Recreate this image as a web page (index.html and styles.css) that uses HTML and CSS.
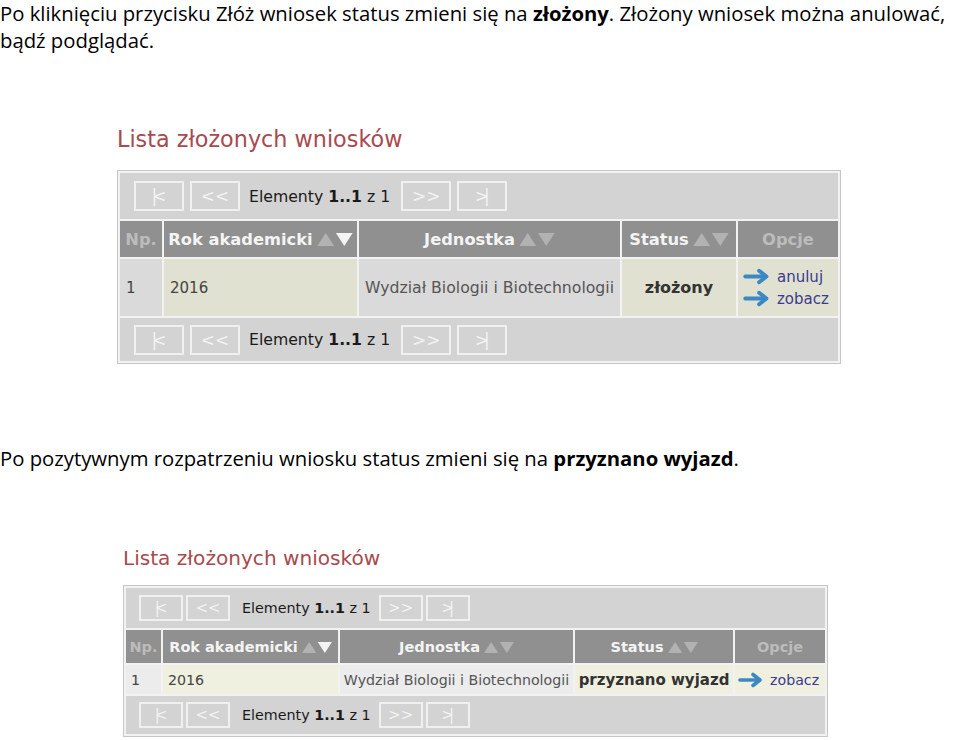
FILE: index.html
```html
<!DOCTYPE html>
<html lang="pl">
<head>
    <meta charset="UTF-8">
    <meta name="viewport" content="width=device-width, initial-scale=1.0">
    <title>Lista złożonych wniosków</title>
    <link rel="stylesheet" href="styles.css">
</head>
<body>
    <p class="doc doc-first">Po kliknięciu przycisku Złóż wniosek status zmieni się na <b>złożony</b>. Złożony wniosek można anulować,<br>bądź podglądać.</p>

    <div class="shot shot-big">
        <h2 class="shot-title">Lista złożonych wniosków</h2>
        <div class="grid-box">
            <table class="grid">
                <colgroup>
                    <col class="c-np"><col class="c-rok"><col class="c-jed"><col class="c-stat"><col class="c-opc">
                </colgroup>
                <tr>
                    <td colspan="5" class="pager pager-top">
                        <div class="pager-bar">
                            <span class="pg-btn"><span class="tight">|&lt;</span></span>
                            <span class="pg-btn">&lt;&lt;</span>
                            <span class="pg-info">Elementy <b>1..1</b> z 1</span>
                            <span class="pg-btn">&gt;&gt;</span>
                            <span class="pg-btn"><span class="tight">&gt;|</span></span>
                        </div>
                    </td>
                </tr>
                <tr class="head">
                    <th class="off">Np.</th>
                    <th>Rok akademicki<svg class="sort" viewBox="0 0 38 14"><polygon class="up" points="0,14 9,0 18,14" /><polygon class="dn" points="20,0 38,0 29,14" /></svg></th>
                    <th>Jednostka<svg class="sort" viewBox="0 0 38 14"><polygon class="up" points="0,14 9,0 18,14" /><polygon class="up" points="20,0 38,0 29,14" /></svg></th>
                    <th>Status<svg class="sort" viewBox="0 0 38 14"><polygon class="up" points="0,14 9,0 18,14" /><polygon class="up" points="20,0 38,0 29,14" /></svg></th>
                    <th class="off">Opcje</th>
                </tr>
                <tr class="row">
                    <td class="plain left">1</td>
                    <td class="tint left">2016</td>
                    <td class="plain unit">Wydział Biologii i Biotechnologii</td>
                    <td class="tint status">złożony</td>
                    <td class="tint opts">
                        <a class="opt" href="#"><svg class="arrow" viewBox="0 0 28 16"><path d="M2 8 H20" /><path d="M15 2.5 L22 8 L15 13.5" /></svg>anuluj</a>
                        <a class="opt" href="#"><svg class="arrow" viewBox="0 0 28 16"><path d="M2 8 H20" /><path d="M15 2.5 L22 8 L15 13.5" /></svg>zobacz</a>
                    </td>
                </tr>
                <tr>
                    <td colspan="5" class="pager pager-bottom">
                        <div class="pager-bar">
                            <span class="pg-btn"><span class="tight">|&lt;</span></span>
                            <span class="pg-btn">&lt;&lt;</span>
                            <span class="pg-info">Elementy <b>1..1</b> z 1</span>
                            <span class="pg-btn">&gt;&gt;</span>
                            <span class="pg-btn"><span class="tight">&gt;|</span></span>
                        </div>
                    </td>
                </tr>
            </table>
        </div>
    </div>

    <p class="doc doc-second">Po pozytywnym rozpatrzeniu wniosku status zmieni się na <b>przyznano wyjazd</b>.</p>

    <div class="shot shot-small">
        <h2 class="shot-title">Lista złożonych wniosków</h2>
        <div class="grid-box">
            <table class="grid">
                <colgroup>
                    <col class="c-np"><col class="c-rok"><col class="c-jed"><col class="c-stat"><col class="c-opc">
                </colgroup>
                <tr>
                    <td colspan="5" class="pager pager-top">
                        <div class="pager-bar">
                            <span class="pg-btn"><span class="tight">|&lt;</span></span>
                            <span class="pg-btn">&lt;&lt;</span>
                            <span class="pg-info">Elementy <b>1..1</b> z 1</span>
                            <span class="pg-btn">&gt;&gt;</span>
                            <span class="pg-btn"><span class="tight">&gt;|</span></span>
                        </div>
                    </td>
                </tr>
                <tr class="head">
                    <th class="off">Np.</th>
                    <th>Rok akademicki<svg class="sort" viewBox="0 0 38 14"><polygon class="up" points="0,14 9,0 18,14" /><polygon class="dn" points="20,0 38,0 29,14" /></svg></th>
                    <th>Jednostka<svg class="sort" viewBox="0 0 38 14"><polygon class="up" points="0,14 9,0 18,14" /><polygon class="up" points="20,0 38,0 29,14" /></svg></th>
                    <th>Status<svg class="sort" viewBox="0 0 38 14"><polygon class="up" points="0,14 9,0 18,14" /><polygon class="up" points="20,0 38,0 29,14" /></svg></th>
                    <th class="off">Opcje</th>
                </tr>
                <tr class="row">
                    <td class="plain left">1</td>
                    <td class="tint left">2016</td>
                    <td class="plain unit">Wydział Biologii i Biotechnologii</td>
                    <td class="tint status">przyznano wyjazd</td>
                    <td class="tint opts">
                        <a class="opt" href="#"><svg class="arrow" viewBox="0 0 28 16"><path d="M2 8 H20" /><path d="M15 2.5 L22 8 L15 13.5" /></svg>zobacz</a>
                    </td>
                </tr>
                <tr>
                    <td colspan="5" class="pager pager-bottom">
                        <div class="pager-bar">
                            <span class="pg-btn"><span class="tight">|&lt;</span></span>
                            <span class="pg-btn">&lt;&lt;</span>
                            <span class="pg-info">Elementy <b>1..1</b> z 1</span>
                            <span class="pg-btn">&gt;&gt;</span>
                            <span class="pg-btn"><span class="tight">&gt;|</span></span>
                        </div>
                    </td>
                </tr>
            </table>
        </div>
    </div>
</body>
</html>
```

FILE: styles.css
```css
body {
    margin: 0;
    background: #fff;
    color: #000;
}
.doc {
    margin: 0;
    font-family: "Open Sans", sans-serif;
    font-size: 20.3px;
    line-height: 27px;
    white-space: nowrap;
}
.doc b {
    font-weight: 700;
}
.doc-second {
    margin-top: 77px;
}

/* screenshots of the application */
.shot {
    font-family: "DejaVu Sans", Verdana, sans-serif;
}
.shot-title {
    margin: 0;
    font-weight: normal;
    color: #a84a4f;
}
.grid-box {
    display: inline-block;
    border: 1px solid #c6c6c6;
}
.grid {
    border-collapse: separate;
    border-spacing: 2px;
    background: #f2f2f2;
    table-layout: fixed;
}
.grid td, .grid th {
    padding: 0;
}
.pager {
    background: #d3d3d3;
}
.pager-bar {
    display: flex;
    align-items: center;
}
.pg-btn {
    display: flex;
    align-items: center;
    justify-content: center;
    box-sizing: border-box;
    border: 2px solid #f0f0f0;
    color: #f2f2f2;
}
.tight {
    letter-spacing: -5px;
    margin-right: 5px;
}
.pg-info {
    color: #1a1a1a;
    white-space: nowrap;
}
.head th {
    background: #909090;
    color: #f4f4f4;
    font-weight: bold;
    text-align: center;
    white-space: nowrap;
}
.head th.off {
    color: #bcbcbc;
}
.sort {
    vertical-align: -1px;
}
.sort .up {
    fill: #b2b2b2;
}
.sort .dn {
    fill: #f4f4f4;
}
.row td {
    color: #444;
    white-space: nowrap;
}
.row .left {
    text-align: left;
}
.row .unit {
    text-align: center;
    color: #555;
}
.row .status {
    text-align: center;
    font-weight: bold;
    color: #333;
}
.opt {
    display: flex;
    align-items: center;
    color: #3b3b8f;
    text-decoration: none;
}
.arrow {
    fill: none;
    stroke: #3a89c4;
    stroke-width: 3.6;
    stroke-linecap: round;
    stroke-linejoin: round;
}
.plain {
    background: #dadada;
}
.tint {
    background: #e1e1d1;
}

/* first screenshot */
.shot-big {
    margin: 70px 0 0 117px;
}
.shot-big .shot-title {
    font-size: 22.3px;
    line-height: 30px;
    margin-bottom: 16px;
}
.shot-big .c-np { width: 42px; }
.shot-big .c-rok { width: 193px; }
.shot-big .c-jed { width: 261px; }
.shot-big .c-stat { width: 114px; }
.shot-big .c-opc { width: 100px; }
.shot-big .pager-top {
    height: 46px;
}
.shot-big .pager-bottom {
    height: 43px;
}
.shot-big .pager-bar {
    padding-left: 14px;
    font-size: 15.7px;
}
.shot-big .pg-btn {
    width: 50px;
    height: 30px;
    margin-right: 6px;
    font-size: 17px;
}
.shot-big .pg-info {
    margin: 0 11px 0 3px;
}
.shot-big .head th {
    height: 36px;
    font-size: 16.3px;
}
.shot-big .sort {
    width: 36px;
    height: 13px;
    margin-left: 4px;
}
.shot-big .row td {
    height: 57px;
    font-size: 15px;
}
.shot-big .row .left {
    padding-left: 6px;
}
.shot-big .row .unit {
    font-size: 15.7px;
}
.shot-big .row .status {
    font-size: 16px;
}
.shot-big .opts {
    padding-left: 5px;
    font-size: 17px;
}
.shot-big .opt {
    line-height: 22px;
}
.shot-big .arrow {
    width: 30px;
    height: 17px;
    margin-right: 4px;
}

/* second screenshot */
.shot-small {
    margin: 72px 0 0 123px;
}
.shot-small .shot-title {
    font-size: 20.1px;
    line-height: 28px;
    margin-bottom: 13px;
}
.shot-small .c-np { width: 35px; }
.shot-small .c-rok { width: 175px; }
.shot-small .c-jed { width: 233px; }
.shot-small .c-stat { width: 158px; }
.shot-small .c-opc { width: 90px; }
.shot-small .pager-top {
    height: 40px;
}
.shot-small .pager-bottom {
    height: 38px;
}
.shot-small .pager-bar {
    padding-left: 13px;
    font-size: 14.3px;
}
.shot-small .pg-btn {
    width: 44px;
    height: 26px;
    margin-right: 3px;
    font-size: 15px;
}
.shot-small .pg-info {
    margin: 0 8px 0 9px;
}
.shot-small .head th {
    height: 33px;
    font-size: 14.5px;
}
.shot-small .sort {
    width: 30px;
    height: 11px;
    margin-left: 4px;
}
.shot-small .row td {
    height: 29px;
    font-size: 14.2px;
}
.shot-small .row .left {
    padding-left: 5px;
}
.shot-small .row .plain {
    background: #ececec;
}
.shot-small .row .tint {
    background: #f0f0e0;
}
.shot-small .row .status {
    font-size: 15px;
}
.shot-small .opts {
    padding-left: 3px;
    font-size: 15.5px;
}
.shot-small .arrow {
    width: 28px;
    height: 16px;
    margin-right: 4px;
}
```
